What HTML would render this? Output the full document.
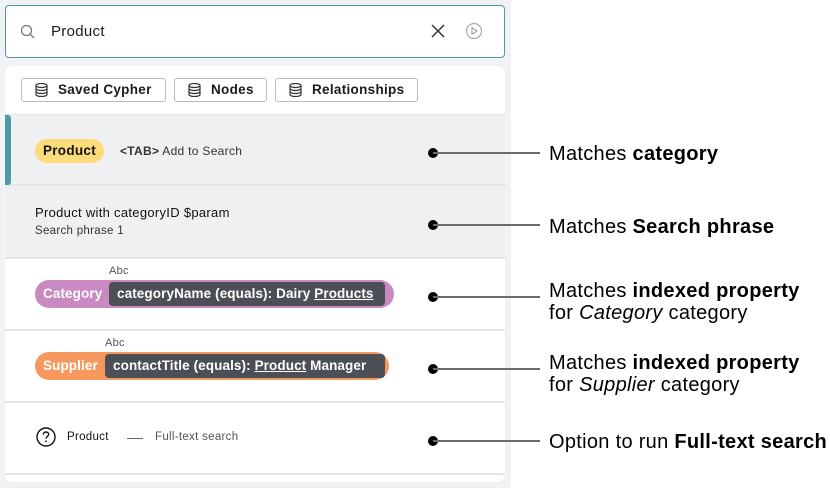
<!DOCTYPE html>
<html><head><style>
*{box-sizing:border-box;margin:0;padding:0}
body{width:830px;height:488px;background:#fff;font-family:"Liberation Sans",sans-serif;position:relative;overflow:hidden}
.bg{position:absolute;left:0;top:0;width:511px;height:488px;background:#f1f2f3}
.search{position:absolute;left:5px;top:5px;width:500px;height:53px;background:#fff;border:1px solid #4d9aa3;border-radius:4px}
.panel{position:absolute;left:5px;top:66px;width:500px;height:416px;background:#fff;border-radius:8px;overflow:hidden;letter-spacing:0.3px}
.chip{position:absolute;top:12px;height:24px;border:1px solid #b8bcc0;border-radius:3px;font-size:13.5px;font-weight:bold;color:#1a1b1d;line-height:22px;padding-left:36px}
.chip svg{position:absolute;left:13px;top:4px}
.row{position:absolute;left:0;width:500px;border-bottom:2px solid #e3e5e8}
.gray{background:#eff0f2}
.ann{position:absolute;font-size:20px;letter-spacing:0.3px;color:#000;line-height:22px}
.dot{position:absolute;width:10px;height:10px;border-radius:50%;background:#000}
.line{position:absolute;height:2px;background:#6b6b6b}
.pill{position:absolute;left:30px;height:28px;border-radius:14px;font-size:13.5px;font-weight:bold;color:#fff;line-height:28px;padding-left:8px;white-space:nowrap;letter-spacing:0.1px}
.dark{position:absolute;top:2px;height:24px;background:#4c4f56;border-radius:4px;line-height:24px;padding:0 8px;white-space:nowrap}
.abc{position:absolute;font-size:11px;color:#555}
</style></head><body>
<div class="bg"></div>
<div class="search">
<svg style="position:absolute;left:14px;top:18px" width="16" height="16" viewBox="0 0 16 16"><circle cx="6.5" cy="6.5" r="5" fill="none" stroke="#777" stroke-width="1.3"/><line x1="10.2" y1="10.2" x2="14" y2="14" stroke="#777" stroke-width="1.3"/></svg>
<div style="position:absolute;left:45px;top:17px;font-size:15px;color:#1a1a1a;letter-spacing:0.3px">Product</div>
<svg style="position:absolute;left:425px;top:18px" width="14" height="14" viewBox="0 0 14 14"><path d="M1 1L13 13M13 1L1 13" stroke="#333" stroke-width="1.5"/></svg>
<svg style="position:absolute;left:459px;top:16px" width="18" height="18" viewBox="0 0 18 18"><circle cx="9" cy="9" r="7.5" fill="none" stroke="#aaa" stroke-width="1.2"/><path d="M7 5.8L12 9L7 12.2Z" fill="none" stroke="#aaa" stroke-width="1.2"/></svg>
</div>
<div class="panel">
<div class="chip" style="left:16px;width:145px">Saved Cypher<svg width="13" height="14" viewBox="0 0 13 14"><ellipse cx="6.5" cy="2.5" rx="5.5" ry="2" fill="none" stroke="#333" stroke-width="1.2"/><path d="M1 2.5V11.5C1 12.6 3.5 13.5 6.5 13.5S12 12.6 12 11.5V2.5M1 5.5C1 6.6 3.5 7.5 6.5 7.5S12 6.6 12 5.5M1 8.5C1 9.6 3.5 10.5 6.5 10.5S12 9.6 12 8.5" fill="none" stroke="#333" stroke-width="1.2"/></svg></div>
<div class="chip" style="left:169px;width:93px">Nodes<svg width="13" height="14" viewBox="0 0 13 14"><ellipse cx="6.5" cy="2.5" rx="5.5" ry="2" fill="none" stroke="#333" stroke-width="1.2"/><path d="M1 2.5V11.5C1 12.6 3.5 13.5 6.5 13.5S12 12.6 12 11.5V2.5M1 5.5C1 6.6 3.5 7.5 6.5 7.5S12 6.6 12 5.5M1 8.5C1 9.6 3.5 10.5 6.5 10.5S12 9.6 12 8.5" fill="none" stroke="#333" stroke-width="1.2"/></svg></div>
<div class="chip" style="left:270px;width:143px">Relationships<svg width="13" height="14" viewBox="0 0 13 14"><ellipse cx="6.5" cy="2.5" rx="5.5" ry="2" fill="none" stroke="#333" stroke-width="1.2"/><path d="M1 2.5V11.5C1 12.6 3.5 13.5 6.5 13.5S12 12.6 12 11.5V2.5M1 5.5C1 6.6 3.5 7.5 6.5 7.5S12 6.6 12 5.5M1 8.5C1 9.6 3.5 10.5 6.5 10.5S12 9.6 12 8.5" fill="none" stroke="#333" stroke-width="1.2"/></svg></div>
<div class="row gray" style="top:48px;height:72px;border-top:1px solid #e3e5e8">
<div style="position:absolute;left:0;top:0;width:6px;height:70px;background:#4d9aa3;border-radius:0 3px 3px 0"></div>
<div style="position:absolute;left:30px;top:24px;height:24px;width:69px;background:#fcdc7a;border-radius:12px;font-size:13.5px;font-weight:bold;line-height:24px;text-align:center;color:#111">Product</div>
<div style="position:absolute;left:115px;top:29px;font-size:12px;color:#333"><b>&lt;TAB&gt;</b> Add to Search</div>
</div>
<div class="row gray" style="top:120px;height:73px">
<div style="position:absolute;left:30px;top:19px;font-size:13px;color:#111">Product with categoryID $param</div>
<div style="position:absolute;left:30px;top:39px;font-size:11.5px;color:#333">Search phrase 1</div>
</div>
<div class="row" style="top:193px;height:72px">
<div class="abc" style="left:104px;top:6px">Abc</div>
<div class="pill" style="top:21px;width:359px;background:#c88ac0">Category<div class="dark" style="left:74px;width:276px">categoryName (equals): Dairy <u>Products</u></div></div>
</div>
<div class="row" style="top:265px;height:72px">
<div class="abc" style="left:100px;top:6px">Abc</div>
<div class="pill" style="top:21px;width:354px;background:#f7995f">Supplier<div class="dark" style="left:70px;width:280px">contactTitle (equals): <u>Product</u> Manager</div></div>
</div>
<div class="row" style="top:337px;height:72px">
<svg style="position:absolute;left:31px;top:24px" width="20" height="20" viewBox="0 0 20 20"><circle cx="10" cy="10" r="9" fill="none" stroke="#111" stroke-width="1.4"/><path d="M7.3 7.6C7.3 6 8.5 5 10 5S12.7 6 12.7 7.5C12.7 9.3 10 9.4 10 11.6" fill="none" stroke="#111" stroke-width="1.4"/><circle cx="10" cy="14.3" r="0.9" fill="#111"/></svg>
<div style="position:absolute;left:62px;top:28px;font-size:11.5px;color:#111">Product</div>
<div style="position:absolute;left:122px;top:35px;width:16px;height:1px;background:#666"></div>
<div style="position:absolute;left:150px;top:28px;font-size:11.5px;color:#555">Full-text search</div>
</div>
</div>
<div class="dot" style="left:428px;top:148px"></div><div class="line" style="left:433px;top:152px;width:107px"></div>
<div class="dot" style="left:428px;top:220px"></div><div class="line" style="left:433px;top:224px;width:107px"></div>
<div class="dot" style="left:428px;top:292px"></div><div class="line" style="left:433px;top:296px;width:107px"></div>
<div class="dot" style="left:428px;top:364px"></div><div class="line" style="left:433px;top:368px;width:107px"></div>
<div class="dot" style="left:428px;top:436px"></div><div class="line" style="left:433px;top:440px;width:107px"></div>
<div class="ann" style="left:549px;top:143px">Matches <b>category</b></div>
<div class="ann" style="left:549px;top:216px">Matches <b>Search phrase</b></div>
<div class="ann" style="left:549px;top:280px">Matches <b>indexed property</b><br>for <i>Category</i> category</div>
<div class="ann" style="left:549px;top:352px">Matches <b>indexed property</b><br>for <i>Supplier</i> category</div>
<div class="ann" style="left:549px;top:431px">Option to run <b>Full-text search</b></div>
</body></html>
